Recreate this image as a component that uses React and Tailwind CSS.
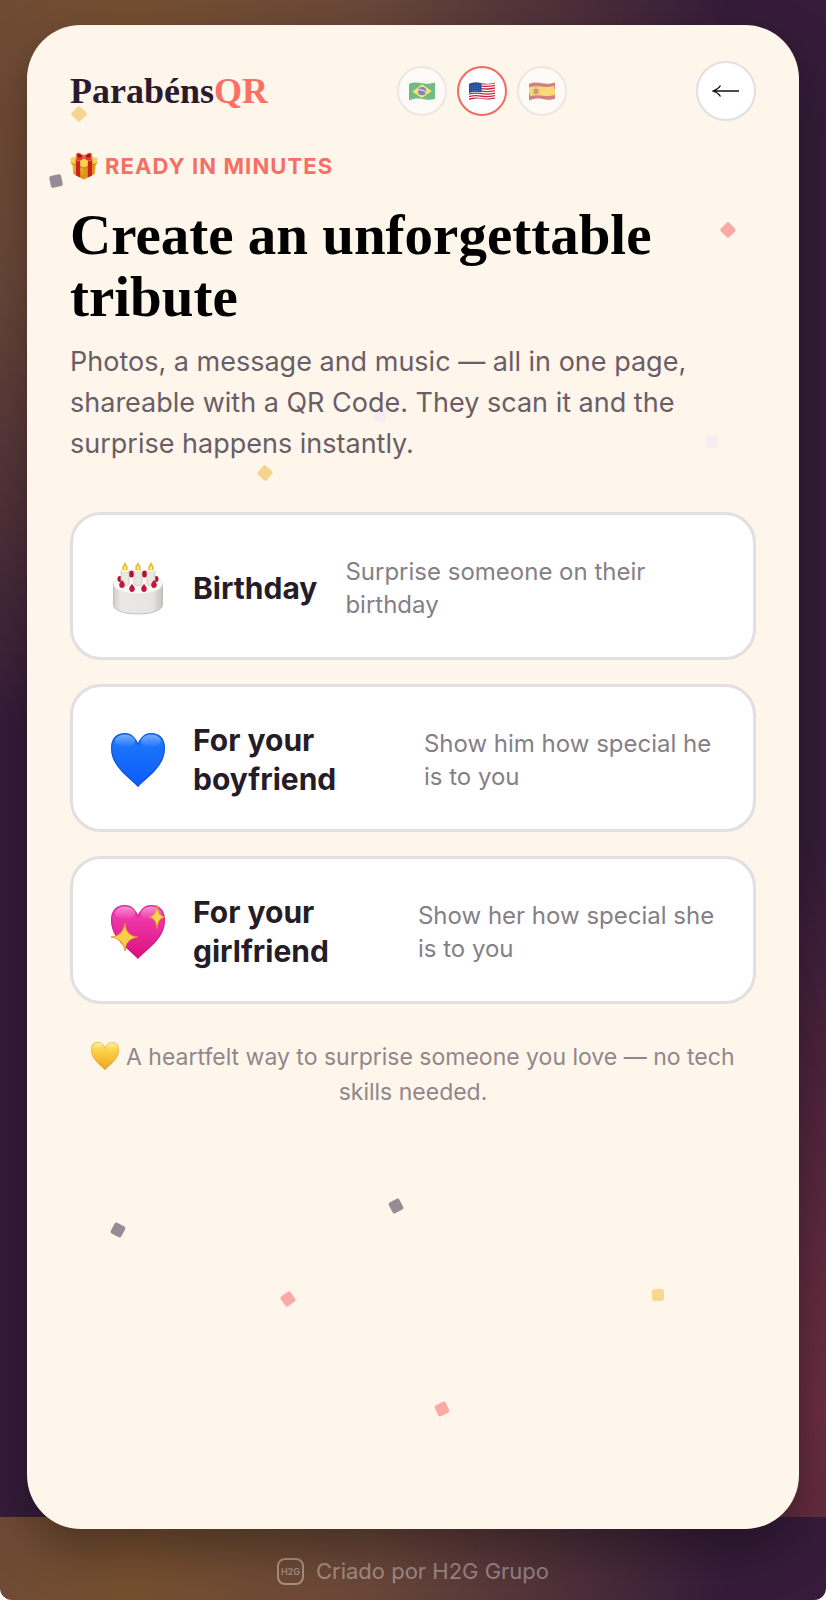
const languages = [
  { code: 'pt', label: 'Português', Flag: BrazilFlag },
  { code: 'en', label: 'English', Flag: UsaFlag },
  { code: 'es', label: 'Español', Flag: SpainFlag },
];

const occasions = [
  { title: 'Birthday', text: 'Surprise someone on their birthday', Icon: Cake },
  { title: 'For your boyfriend', text: 'Show him how special he is to you', Icon: BlueHeart },
  { title: 'For your girlfriend', text: 'Show her how special she is to you', Icon: SparklingHeart },
];

const confetti = [
  'left-[6%] top-[83px] rotate-45 bg-[#f5d48f]',
  'left-[3%] top-[150px] -rotate-12 bg-[#978b96]',
  'left-[90%] top-[199px] rotate-45 bg-[#fba9a4]',
  'left-[45%] top-[385px] rotate-12 bg-[#f8ecf0]',
  'left-[88%] top-[411px] bg-[#f8ecf0]',
  'left-[30%] top-[442px] rotate-[40deg] bg-[#f5d48f]',
  'left-[47%] top-[1175px] -rotate-[28deg] bg-[#978b96]',
  'left-[11%] top-[1199px] rotate-[28deg] bg-[#978b96]',
  'left-[33%] top-[1268px] -rotate-[35deg] bg-[#fba9a4]',
  'left-[81%] top-[1264px] -rotate-3 bg-[#f5d98f]',
  'left-[53%] top-[1378px] -rotate-[25deg] bg-[#fba9a4]',
];

function FlagWave({ id, children }) {
  return (
    <svg viewBox="0 0 26 19" className="h-[19px] w-[26px]" aria-hidden="true">
      <clipPath id={id}>
        <path d="M0 2C5 0 9 .5 13 1.3S21 2 26 .5V16.7C21 18.4 17 17.8 13 17S5 16.6 0 18.4Z" />
      </clipPath>
      <g clipPath={`url(#${id})`}>{children}</g>
    </svg>
  );
}

function BrazilFlag() {
  return (
    <FlagWave id="flag-br">
      <path fill="#159447" d="M0 0h26v19H0z" />
      <path fill="#f6d32e" d="m13 2.3 9.8 6.7L13 16 3.2 9.8Z" />
      <circle cx="13" cy="9.2" r="4.1" fill="#24478f" />
      <path d="M9 8c3-.7 6 .3 8 2.7" fill="none" stroke="#fff" strokeWidth="1" />
    </FlagWave>
  );
}

function UsaFlag() {
  return (
    <FlagWave id="flag-us">
      <path fill="#fff" d="M0 0h26v19H0z" />
      {[0, 1, 2, 3, 4, 5, 6].map((n) => (
        <path key={n} transform={`translate(0 ${n * 2.55})`} d="M0 2C5 .3 9 .8 13 1.5S21 2 26 .9" fill="none" stroke="#c9283e" strokeWidth="1.3" />
      ))}
      <path fill="#24509b" d="M0 0h12.5v10.3C8 9.6 4 9.5 0 11Z" />
      <path d="M1.5 4h10M1.5 6.2h10M1.5 8.4h10" stroke="#7f9bd0" strokeWidth=".6" strokeDasharray=".7 1" />
    </FlagWave>
  );
}

function SpainFlag() {
  return (
    <FlagWave id="flag-es">
      <path fill="#b8323c" d="M0 0h26v19H0z" />
      <path d="M0 9.8C5 8.3 9 8.4 13 9.1s8 .7 13-.7" fill="none" stroke="#f7c92f" strokeWidth="9" />
      <path fill="#b5523a" d="M5 7h4v4.5c-1.3 1-2.7 1-4 0Z" />
      <path d="M4 7v5m6-5v5M5.5 6h3" stroke="#a97a4a" strokeWidth=".8" />
    </FlagWave>
  );
}

function Gift() {
  return (
    <svg viewBox="0 0 28 28" className="size-7 shrink-0" aria-hidden="true">
      <defs>
        <linearGradient id="gift-gold" x1="0" x2="0" y1="0" y2="1">
          <stop stopColor="#f8c83c" />
          <stop offset="1" stopColor="#d78a12" />
        </linearGradient>
      </defs>
      <path fill="url(#gift-gold)" d="m2 9 12 5v13.5L3.3 22Z" />
      <path fill="#dc9a1c" d="m26 9-12 5v13.5L24.7 22Z" />
      <path fill="#f9d253" d="M.7 6 14 2l13.300 4v4.500L14 15.500.7 10.500Z" />
      <path fill="#c98a18" d="m.7 10.500 13.300 5 13.300-5-.4 1.200L14 17 1.100 11.700Z" />
      <path fill="#c8241f" d="m5.700 8 4.500 1.600v16L6 23.500Zm16.600 0-4.500 1.600v16l4.200-2.100Z" />
      <path fill="#e2362e" d="m5 7 9-4 9 4-4.500 2L14 6.500 9.500 9Z" />
      <path fill="#e9403a" d="M14 5C11 .2 7-.1 6.500 1.500 6 3 6 6 7.500 6.500 10 7 12 6 14 5Zm0 0c3-4.800 7-5.100 7.500-3.500.5 1.500.5 4.500-1 5C18 7 16 6 14 5Z" />
      <path fill="#97150f" d="M12.500 4.800C10.500 2.700 8.500 2 7.700 2.500c-.4 1 0 2.500.6 2.800 1.300.4 2.700 0 4.200-.5Zm3 0c2-2.100 4-2.800 4.800-2.300.4 1 0 2.500-.6 2.800-1.300.4-2.700 0-4.200-.5Z" />
      <circle cx="14" cy="5" r="2" fill="#f45a50" />
    </svg>
  );
}

function Cake() {
  return (
    <svg viewBox="-2 -1 54 54" className="size-[54px] shrink-0" aria-hidden="true">
      <defs>
        <linearGradient id="cake-side" x1="0" x2="1">
          <stop stopColor="#cfcecb" />
          <stop offset=".15" stopColor="#eae9e7" />
          <stop offset=".8" stopColor="#e6e5e3" />
          <stop offset="1" stopColor="#c4c3bf" />
        </linearGradient>
      </defs>
      <path fill="url(#cake-side)" stroke="#b5b4b0" strokeWidth=".8" d="M.5 22v21c1 12 48 12 49 0V22Z" />
      <ellipse cx="25" cy="22" rx="24.500" ry="10" fill="#faf9f6" stroke="#e4e2dd" strokeWidth=".8" />
      <g fill="#b40f35">
        <ellipse cx="7" cy="17" rx="2.500" ry="3" />
        <ellipse cx="18.500" cy="12" rx="2.600" ry="3.500" />
        <ellipse cx="31.500" cy="12" rx="2.600" ry="3.500" />
        <ellipse cx="43" cy="17" rx="2.500" ry="3" />
      </g>
      {[12, 25, 38].map((x) => (
        <g key={x} transform={`translate(${x} 0)`}>
          <path fill="#e9eadf" stroke="#c2c4b6" strokeWidth=".7" d="M-4 9v13c1.500 2 6.500 2 8 0V9Z" />
          <ellipse cy="9" rx="4" ry="1.600" fill="#fffef2" stroke="#d1cfbb" strokeWidth=".6" />
          <path fill="#f0b823" d="M0 0c2 3.800 3.200 5 2.500 7C1.700 9-1.700 9-2.500 7-3.200 5-2 3.800 0 0Z" />
          <path fill="#fff5a0" d="M0 3.500c1.300 2 1.500 4.500 0 4.500S-1.300 5.500 0 3.500Z" />
        </g>
      ))}
      <path fill="#bf1742" d="M9 18c2 2 2.800 3.500 2.800 5 0 4-5.600 4-5.600 0 0-1.500.8-3 2.800-5Zm10 4c2 2 2.800 3.500 2.800 5 0 4-5.600 4-5.600 0 0-1.500.8-3 2.800-5Zm12 0c2 2 2.800 3.500 2.800 5 0 4-5.600 4-5.600 0 0-1.500.8-3 2.800-5Zm10-4c2 2 2.800 3.500 2.800 5 0 4-5.600 4-5.600 0 0-1.500.8-3 2.800-5Z" />
    </svg>
  );
}

const heartPath = 'M27 54C18 44 0 34 0 15 0 5 6 0 14 0c6 0 10 4 13 10C30 4 34 0 40 0c8 0 14 5 14 15 0 19-18 29-27 39Z';

function Heart({ id, top, bottom, edge, className, children }) {
  return (
    <svg viewBox="0 0 54 54" className={className} aria-hidden="true">
      <defs>
        <linearGradient id={id} x1="0" x2="0" y1="0" y2="1">
          <stop stopColor={top} />
          <stop offset="1" stopColor={bottom} />
        </linearGradient>
        <linearGradient id={`${id}-shine`} x1="0" x2="0" y1="0" y2="1">
          <stop stopColor="#fff" stopOpacity=".4" />
          <stop offset="1" stopColor="#fff" stopOpacity="0" />
        </linearGradient>
        <clipPath id={`${id}-clip`}>
          <path d={heartPath} />
        </clipPath>
      </defs>
      <path d={heartPath} fill={`url(#${id})`} />
      <path d={heartPath} fill="none" stroke={edge} strokeOpacity=".6" strokeWidth="2.400" clipPath={`url(#${id}-clip)`} />
      <ellipse cx="14" cy="8" rx="10" ry="6.500" fill={`url(#${id}-shine)`} />
      <ellipse cx="40" cy="8" rx="10" ry="6.500" fill={`url(#${id}-shine)`} />
      {children}
    </svg>
  );
}

function BlueHeart() {
  return <Heart id="heart-blue" top="#1f7afa" bottom="#0b5cfb" edge="#0a47c4" className="size-[54px] shrink-0" />;
}

function SparklingHeart() {
  return (
    <Heart id="heart-pink" top="#f545b8" bottom="#dc0f7c" edge="#c21c85" className="size-[54px] shrink-0 overflow-visible">
      <path fill="#fbcf45" stroke="#dc8c2a" strokeWidth=".8" d="M14 18c1 9 4 13 13 14-9 2-12 5-13 14-2-9-5-12-14-14 9-1 12-5 14-14Z" />
      <path fill="#fbd34a" stroke="#dc8c2a" strokeWidth=".8" d="M46 0c.8 8 3 11 8 12-5 1-7 4-8 12-1-8-3-11-8-12 5-1 7-4 8-12Z" />
    </Heart>
  );
}

function ArrowLeft() {
  return (
    <svg viewBox="0 0 28 14" className="h-[14px] w-7" fill="none" stroke="#111" strokeWidth="1.300" aria-hidden="true">
      <path d="M27 7H2M8.500 1.500C7 4 4.500 6 1 7c3.500 1 6 3 7.500 5.500" />
    </svg>
  );
}

export default function App() {
  return (
    <div className="bg-white font-['Inter','Liberation_Sans',sans-serif]">
      <div className="flex min-h-screen flex-col overflow-hidden rounded-b-xl bg-[#361c3a] bg-[radial-gradient(ellipse_72%_46%_at_16%_3%,#76502f_0%,#6a4739_40%,transparent_100%),radial-gradient(ellipse_50%_38%_at_105%_93%,#713041_0%,transparent_100%)] bg-[length:100%_1517px] px-[27px] pt-[25px]">
        <main className="relative flex min-h-[1504px] flex-col rounded-[54px] bg-[#fef6ea] px-[43px] pt-[35px] shadow-[0_20px_50px_rgba(0,0,0,0.35)]">
          <div className="pointer-events-none absolute inset-0" aria-hidden="true">
            {confetti.map((piece) => (
              <span key={piece} className={`absolute size-3 rounded-xs ${piece}`} />
            ))}
          </div>

          <header className="relative flex h-[62px] items-center justify-between">
            <a href="#" className="font-['Liberation_Serif',serif] text-[36px] leading-none font-bold text-[#2a1a2e]">
              Parabéns<span className="text-[#fb6f65]">QR</span>
            </a>
            <nav className="flex gap-[10px]" aria-label="Language">
              {languages.map(({ code, label, Flag }) => (
                <button
                  key={code}
                  type="button"
                  aria-label={label}
                  aria-pressed={code === 'en'}
                  className={`flex size-[50px] items-center justify-center rounded-full border-2 bg-white ${code === 'en' ? 'border-[#f26a60]' : 'border-[#e2dee1] opacity-60'}`}
                >
                  <Flag />
                </button>
              ))}
            </nav>
            <button type="button" aria-label="Back" className="flex size-[60px] items-center justify-center rounded-full border-2 border-[#e2dee1] bg-white">
              <ArrowLeft />
            </button>
          </header>

          <section className="relative mt-7">
            <p className="flex items-center gap-[7px] text-[22px] leading-8 font-bold tracking-wider text-[#f56f66]">
              <Gift />
              READY IN MINUTES
            </p>
            <h1 className="mt-[22px] font-['Liberation_Serif',serif] text-[57px] leading-[62px] font-bold text-black">
              Create an unforgettable tribute
            </h1>
            <p className="mt-[13px] text-[27px] leading-[41px] text-[#6b5d67]">
              Photos, a message and music — all in one page, shareable with a QR Code. They scan it and the surprise happens instantly.
            </p>
          </section>

          <div className="relative mt-12 flex flex-col gap-6">
            {occasions.map(({ title, text, Icon }) => (
              <button key={title} type="button" className="flex min-h-[148px] items-center gap-7 rounded-[31px] border-3 border-[#e2dee1] bg-white px-[38px] pt-1 text-left">
                <Icon />
                <span className="text-[30px] leading-[39px] font-bold text-[#251c28]">{title}</span>
                <span className="text-[24px] leading-[33px] text-[#858086]">{text}</span>
              </button>
            ))}
          </div>

          <p className="relative mt-9 text-center text-[23px] leading-[35px] text-[#92868a]">
            <Heart id="heart-gold" top="#ffe65e" bottom="#f2a321" edge="#d99a2b" className="inline-block size-7 align-[-5px]" /> A heartfelt way to surprise someone you love — no tech skills needed.
          </p>
        </main>

        <footer className="flex flex-1 items-center justify-center gap-3 pt-[14px] text-[22px] text-white/40">
          <span className="flex size-[27px] items-center justify-center rounded-lg border-2 border-white/40 text-[9px] font-semibold">H2G</span>
          <a href="#">Criado por H2G Grupo</a>
        </footer>
      </div>
    </div>
  );
}
